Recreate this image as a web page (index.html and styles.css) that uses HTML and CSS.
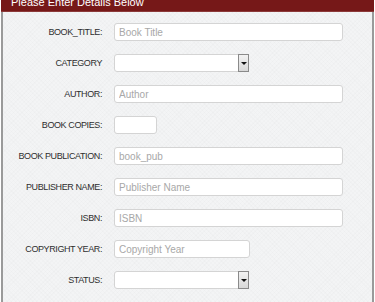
FILE: index.html
```html
<!DOCTYPE html>
<html lang="en">

<head>
    <meta charset="UTF-8">
    <meta name="viewport" content="width=device-width, initial-scale=1.0">
    <title>Add Book</title>
    <link rel="stylesheet" href="styles.css">
</head>

<body>
    <div class="panel">
        <div class="panel-heading">Please Enter Details Below</div>
        <form class="panel-body">
            <div class="form-row">
                <label class="form-label">BOOK_TITLE:</label>
                <input class="form-input wide" type="text" placeholder="Book Title">
            </div>
            <div class="form-row">
                <label class="form-label">CATEGORY</label>
                <div class="form-select">
                    <span class="select-btn"><span class="caret"></span></span>
                </div>
            </div>
            <div class="form-row">
                <label class="form-label">AUTHOR:</label>
                <input class="form-input wide" type="text" placeholder="Author">
            </div>
            <div class="form-row">
                <label class="form-label">BOOK COPIES:</label>
                <input class="form-input tiny" type="text">
            </div>
            <div class="form-row">
                <label class="form-label">BOOK PUBLICATION:</label>
                <input class="form-input wide" type="text" placeholder="book_pub">
            </div>
            <div class="form-row">
                <label class="form-label">PUBLISHER NAME:</label>
                <input class="form-input wide" type="text" placeholder="Publisher Name">
            </div>
            <div class="form-row">
                <label class="form-label">ISBN:</label>
                <input class="form-input wide" type="text" placeholder="ISBN">
            </div>
            <div class="form-row">
                <label class="form-label">COPYRIGHT YEAR:</label>
                <input class="form-input mid" type="text" placeholder="Copyright Year">
            </div>
            <div class="form-row">
                <label class="form-label">STATUS:</label>
                <div class="form-select">
                    <span class="select-btn"><span class="caret"></span></span>
                </div>
            </div>
        </form>
    </div>
</body>

</html>
```

FILE: styles.css
```css
html,
body {
    margin: 0;
    padding: 0;
    height: 100%;
    background: #fff;
    overflow: hidden;
}

.panel {
    margin: -10px 1px 0 1px;
    height: calc(100% + 10px);
    border-left: 2px solid #9a9a9a;
    border-right: 2px solid #9a9a9a;
    background-color: #f3f4f5;
    background-image: repeating-linear-gradient(45deg, rgba(0, 0, 0, 0.012) 0 1px, transparent 1px 3px),
        repeating-linear-gradient(-45deg, rgba(0, 0, 0, 0.012) 0 1px, transparent 1px 3px);
    font-family: "Liberation Sans", Arial, sans-serif;
}

.panel-heading {
    height: 22px;
    margin: 0 -2px;
    padding: 6px 10px 0;
    box-sizing: border-box;
    background: #761818;
    border-bottom: 1px solid #8c3a3a;
    color: #fff;
    font-size: 11px;
}

.panel-body {
    display: flex;
    flex-direction: column;
    gap: 13px;
    padding: 11px 0 0;
}

.form-row {
    display: flex;
    align-items: center;
    height: 18px;
}

.form-label {
    width: 99px;
    padding-right: 12px;
    text-align: right;
    font-size: 9px;
    letter-spacing: -0.4px;
    color: #2e2e2e;
    white-space: nowrap;
}

.form-input {
    height: 18px;
    box-sizing: border-box;
    margin: 0;
    padding: 0 4px;
    border: 1px solid #d4d4d4;
    border-radius: 3px;
    background: #fff;
    font-family: "Liberation Sans", Arial, sans-serif;
    font-size: 10px;
    color: #555;
    outline: none;
}

.form-input::placeholder {
    color: #a8a8a8;
}

.form-input.wide {
    width: 229px;
}

.form-input.mid {
    width: 136px;
}

.form-input.tiny {
    width: 43px;
}

.form-select {
    width: 135px;
    height: 18px;
    box-sizing: border-box;
    display: flex;
    justify-content: flex-end;
    border: 1px solid #d4d4d4;
    border-radius: 3px 0 0 3px;
    background: #fff;
}

.select-btn {
    width: 11px;
    height: 18px;
    margin: -1px -1px 0 0;
    box-sizing: border-box;
    display: flex;
    align-items: center;
    justify-content: center;
    border: 1px solid #8a8a8a;
    background: linear-gradient(#f2f2f2, #d8d8d8);
}

.caret {
    width: 0;
    height: 0;
    border-left: 3px solid transparent;
    border-right: 3px solid transparent;
    border-top: 3px solid #111;
}
```
